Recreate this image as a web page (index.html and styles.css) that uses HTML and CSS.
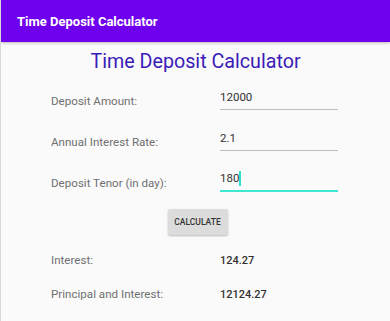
FILE: index.html
```html
<!DOCTYPE html>
<html>
<head>
<meta charset="utf-8">
<link rel="stylesheet" href="styles.css">
</head>
<body>
<div class="screen">
  <header class="appbar"><span class="appbar-title">Time Deposit Calculator</span></header>
  <main class="content">
    <h1 class="title">Time Deposit Calculator</h1>
    <div class="row">
      <span class="label">Deposit Amount:</span>
      <span class="field"><span class="field-text">12000</span></span>
    </div>
    <div class="row">
      <span class="label">Annual Interest Rate:</span>
      <span class="field"><span class="field-text">2.1</span></span>
    </div>
    <div class="row">
      <span class="label">Deposit Tenor (in day):</span>
      <span class="field focused"><span class="field-text">180</span><span class="caret"></span></span>
    </div>
    <div class="btn-wrap"><button class="btn">CALCULATE</button></div>
    <div class="result">
      <span class="label">Interest:</span>
      <span class="value">124.27</span>
    </div>
    <div class="result">
      <span class="label">Principal and Interest:</span>
      <span class="value">12124.27</span>
    </div>
  </main>
</div>
</body>
</html>
```
FILE: styles.css
```css
html, body {
  margin: 0;
  padding: 0;
  background: #fafafa;
  font-family: Roboto, "Liberation Sans", sans-serif;
}
.screen {
  width: 390px;
  height: 321px;
  overflow: hidden;
  border-left: 1px solid #d9d9d9;
  box-sizing: border-box;
  background: #fafafa;
}
.appbar {
  height: 42px;
  background: #6f00ee;
  display: flex;
  align-items: center;
  padding-left: 16px;
  box-shadow: 0 1px 3px rgba(0,0,0,0.25);
  position: relative;
}
.appbar-title {
  color: #fff;
  font-weight: 700;
  font-size: 13px;
}
.content {
  display: flex;
  flex-direction: column;
}
.title {
  margin: 8px 0 0;
  text-align: center;
  font-weight: 400;
  font-size: 19.7px;
  color: #3a1bb8;
  line-height: 24px;
}
.row {
  display: flex;
  align-items: flex-end;
  margin-top: 15px;
  height: 26px;
}
.row:first-of-type { margin-top: 10px; }
.row .label {
  align-self: flex-end;
  line-height: 14px;
  margin-bottom: 2px;
}
.label {
  width: 169px;
  padding-left: 50px;
  color: #707070;
  font-size: 11.6px;
  align-self: center;
}
.field {
  width: 118px;
  height: 26px;
  border-bottom: 1.5px solid #bdbdbd;
  display: flex;
  align-items: center;
  color: #333;
  font-size: 11.5px;
  box-sizing: border-box;
}
.field.focused { border-bottom: 2px solid #3ee8d3; }
.caret {
  display: inline-block;
  width: 2px;
  height: 15px;
  background: #2fe2cc;
}
.btn-wrap {
  display: flex;
  justify-content: center;
  margin-top: 17px;
  padding-left: 4px;
}
.btn {
  width: 60px;
  height: 26px;
  border: none;
  border-radius: 2px;
  background: #dcdcdc;
  box-shadow: 0 1px 2px rgba(0,0,0,0.25);
  font-family: Roboto, "Liberation Sans", sans-serif;
  font-weight: 500;
  font-size: 8.5px;
  color: #333;
  padding: 0;
}
.result {
  display: flex;
  align-items: center;
  height: 20px;
  margin-top: 15px;
}
.result + .result { margin-top: 14px; }
.value {
  color: #333;
  font-size: 11px;
  font-weight: 500;
}
```
